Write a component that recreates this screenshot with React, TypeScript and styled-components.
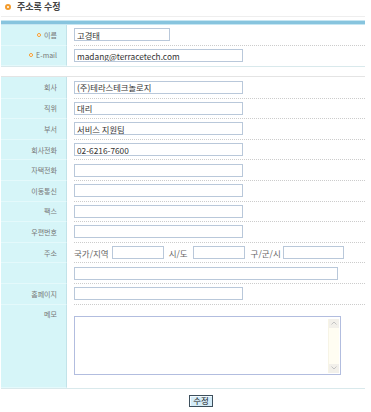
import React from 'react'
import styled, { createGlobalStyle } from 'styled-components'

const GlobalStyle = createGlobalStyle`
  body {
    margin: 0;
    background: #fff;
    font-family: "Noto Sans CJK KR", "Liberation Sans", sans-serif;
  }
`

type RowData = {
  label: string
  required?: boolean
  value?: string
  width?: number
}

const topRows: RowData[] = [
  { label: '이름', required: true, value: '고경태', width: 96 },
  { label: 'E-mail', required: true, value: 'madang@terracetech.com', width: 169 },
]

const infoRows: RowData[] = [
  { label: '회사', value: '(주)테라스테크놀로지' },
  { label: '직위', value: '대리' },
  { label: '부서', value: '서비스 지원팀' },
  { label: '회사전화', value: '02-6216-7600' },
  { label: '자택전화' },
  { label: '이동통신' },
  { label: '팩스' },
  { label: '우편번호' },
]

const App = () => (
  <Page>
    <GlobalStyle />
    <Title>
      <Bullet $size={6} />
      주소록 수정
    </Title>
    <Bar />

    <Table>
      {topRows.map((r, i) => (
        <Row key={r.label} $h={20.5}>
          <Label>
            {r.required && <Bullet $size={4} />}
            {r.label}
          </Label>
          <Value>
            <Field $last={i === topRows.length - 1}>
              <Input $w={r.width || 169} defaultValue={r.value} />
            </Field>
          </Value>
        </Row>
      ))}
    </Table>

    <Table $gap>
      {infoRows.map((r, i) => (
        <Row key={r.label} $h={i === 0 ? 21.6 : 20.6}>
          <Label>{r.label}</Label>
          <Value>
            <Field>
              <Input $w={169} defaultValue={r.value} />
            </Field>
          </Value>
        </Row>
      ))}
      <Row $h={20.6}>
        <Label>주소</Label>
        <Value>
          <Field>
            <Caption>국가/지역</Caption>
            <Input $w={52} $ml={3} />
            <Caption $ml={5}>시/도</Caption>
            <Input $w={52} $ml={5} />
            <Caption $ml={6}>구/군/시</Caption>
            <Input $w={61} $ml={2} />
          </Field>
        </Value>
      </Row>
      <Row $h={20.6}>
        <Label />
        <Value>
          <Field>
            <Input $w={264} />
          </Field>
        </Value>
      </Row>
      <Row $h={20.6}>
        <Label>홈페이지</Label>
        <Value>
          <Field>
            <Input $w={169} />
          </Field>
        </Value>
      </Row>
      <Row $h={83.4}>
        <Label $top>메모</Label>
        <Value>
          <Field $last $top>
            <Memo>
              <MemoText />
              <Scroll>
                <ScrollBtn>
                  <svg width="6" height="4" viewBox="0 0 6 4">
                    <path d="M0.5 3.5 L3 1 L5.5 3.5" fill="none" stroke="#c4c4c4" strokeWidth="1" />
                  </svg>
                </ScrollBtn>
                <ScrollBtn>
                  <svg width="6" height="4" viewBox="0 0 6 4">
                    <path d="M0.5 0.5 L3 3 L5.5 0.5" fill="none" stroke="#c4c4c4" strokeWidth="1" />
                  </svg>
                </ScrollBtn>
              </Scroll>
            </Memo>
          </Field>
        </Value>
      </Row>
    </Table>

    <Actions>
      <Button type="button">수정</Button>
    </Actions>
  </Page>
)

export default App

const Page = styled.div`
  width: 364px;
  margin-left: 1px;
`

const Title = styled.h3`
  display: flex;
  align-items: center;
  gap: 6px;
  height: 17px;
  box-sizing: border-box;
  margin: 0;
  padding: 0 0 3px 4px;
  border-bottom: 1px solid #eeeeee;
  font-size: 9px;
  font-weight: bold;
  color: #444;
`

const Bullet = styled.span<{ $size: number }>`
  display: inline-block;
  flex: none;
  width: ${(p) => p.$size}px;
  height: ${(p) => p.$size}px;
  box-sizing: border-box;
  border: ${(p) => (p.$size < 5 ? 1.5 : 2)}px solid #f39b2c;
  border-radius: 50%;
  background: #fff;
  margin-right: ${(p) => (p.$size < 5 ? 3 : 0)}px;
`

const Bar = styled.div`
  height: 5px;
  box-sizing: border-box;
  margin-top: 3px;
  border-top: 1px solid #c6e6f2;
  border-bottom: 1px solid #c6e6f2;
  background: #87c4de;
`

const Table = styled.div<{ $gap?: boolean }>`
  margin-top: ${(p) => (p.$gap ? 9 : 0)}px;
  border-top: ${(p) => (p.$gap ? '1px solid #e4e4e4' : 'none')};
  border-bottom: 1px solid #d9e9ec;
`

const Row = styled.div<{ $h: number }>`
  display: grid;
  grid-template-columns: 66px 1fr;
  height: ${(p) => p.$h}px;
`

const Label = styled.div<{ $top?: boolean }>`
  display: flex;
  align-items: ${(p) => (p.$top ? 'flex-start' : 'center')};
  justify-content: flex-end;
  padding: ${(p) => (p.$top ? '4px 9px 0 0' : '0 9px 0 0')};
  background: #d6f5f8;
  border-right: 1px solid #c2e3e9;
  border-bottom: 1px solid #e4f9fb;
  font-size: 7px;
  line-height: 10px;
  color: #777;
  white-space: nowrap;
`

const Value = styled.div`
  display: flex;
  padding-left: 7px;
  min-width: 0;
`

const Field = styled.div<{ $last?: boolean; $top?: boolean }>`
  flex: 1;
  display: flex;
  align-items: ${(p) => (p.$top ? 'flex-start' : 'center')};
  padding-top: ${(p) => (p.$top ? 11.4 : 0)}px;
  border-bottom: ${(p) => (p.$last ? 'none' : '1px dotted #cccccc')};
`

const Caption = styled.span<{ $ml?: number }>`
  margin-left: ${(p) => p.$ml || 0}px;
  font-size: 8.5px;
  color: #666;
  white-space: nowrap;
`

const Input = styled.input<{ $w: number; $ml?: number }>`
  width: ${(p) => p.$w}px;
  height: 13px;
  box-sizing: border-box;
  margin: 0 0 0 ${(p) => p.$ml || 0}px;
  padding: 0 2px;
  border: 1px solid #b9c8da;
  background: #fff;
  font-family: "Noto Sans CJK KR", "Liberation Sans", sans-serif;
  font-size: 8.3px;
  color: #333;
  outline: none;
`

const Memo = styled.div`
  display: flex;
  width: 267px;
  height: 59px;
  box-sizing: border-box;
  border: 1px solid #b2bddf;
  background: #fff;
`

const MemoText = styled.textarea`
  flex: 1;
  border: none;
  resize: none;
  outline: none;
  padding: 0;
  margin: 0;
`

const Scroll = styled.div`
  display: flex;
  flex-direction: column;
  justify-content: space-between;
  width: 10px;
  margin: 2px 1px 1px 0;
  background: #fffdf2;
  border-left: 1px solid #f7f4e6;
`

const ScrollBtn = styled.div`
  display: flex;
  align-items: center;
  justify-content: center;
  height: 9px;
  background: #f2f0ea;
`

const Actions = styled.div`
  display: flex;
  padding: 6px 0 0 188px;
`

const Button = styled.button`
  width: 24px;
  height: 12px;
  box-sizing: border-box;
  padding: 0;
  border: 1px solid #3d4f5c;
  background: #d4ecf8;
  box-shadow: inset 1px 1px 0 #f4fbff;
  font-family: "Noto Sans CJK KR", "Liberation Sans", sans-serif;
  font-size: 8.5px;
  line-height: 9px;
  color: #222;
`
